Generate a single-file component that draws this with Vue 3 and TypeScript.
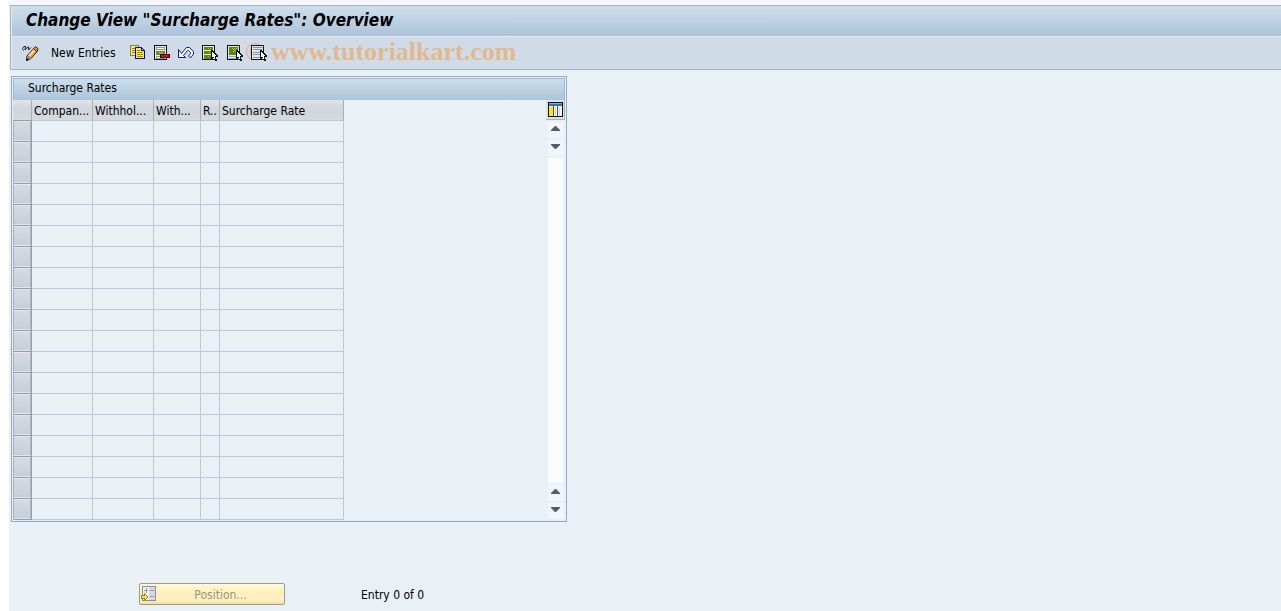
<script setup lang="ts">
interface Column {
  key: string
  label: string
}

const columns: Column[] = [
  { key: 'company', label: 'Compan...' },
  { key: 'withholding-type', label: 'Withhol...' },
  { key: 'withholding-code', label: 'With...' },
  { key: 'recipient', label: 'R..' },
  { key: 'rate', label: 'Surcharge Rate' },
]

const rowCount = 19
</script>

<template>
  <main class="screen">
    <header class="head">
      <h1 class="title">Change View "Surcharge Rates": Overview</h1>
      <div class="toolbar" role="toolbar" aria-label="Table actions">
        <span class="watermark">© www.tutorialkart.com</span>
        <button class="tool" type="button" aria-label="Display or change">
          <svg width="17" height="17" viewBox="0 0 17 17">
            <path d="M.5 3.500L2 1.500H3.500L3 5L5.500 2H6.500V5L9 2.500M.5 3.500L1.500 5.500" fill="none" stroke="#1b1b1b" />
            <path d="M5 11L12 3L15.500 6L9 13.500L4.500 15.500Z" fill="#f59a2e" stroke="#3a2412" />
            <path d="M7 11L12.500 5" stroke="#ffe58c" stroke-width="2" />
            <path d="M11.500 3.500L13.500 1.500L16 3.500V5L14.500 6.500Z" fill="#e08a4a" stroke="#4b2012" />
            <path d="M5 11.500L8.500 14" stroke="#5a82d8" stroke-width="2" />
            <path d="M4 16L4.500 13L7 15Z" fill="#111" />
          </svg>
        </button>
        <button class="new-entries" type="button">New Entries</button>
        <button class="tool" type="button" aria-label="Copy as">
          <svg width="16" height="16" viewBox="0 0 16 16" shape-rendering="crispEdges">
            <path d="M0 0H9V11H0Z" fill="#80805a" />
            <path d="M1 1H8V10H1Z" fill="#ffef32" />
            <path d="M2 3H5V4H2ZM2 5H5V6H2ZM2 7H5V8H2Z" fill="#80805a" />
            <path d="M5 2H12V3H13V4H14V5H15V14H5Z" fill="#0000e6" />
            <path d="M6 3H11V6H14V13H6Z" fill="#ffed24" />
            <path d="M12 4H13V5H12Z" fill="#fff" />
            <path d="M7 5H10V6H7ZM7 7H13V8H7ZM7 9H13V10H7ZM7 11H13V12H7Z" fill="#8f8748" />
          </svg>
        </button>
        <button class="tool" type="button" aria-label="Delete">
          <svg width="16" height="16" viewBox="0 0 16 16" shape-rendering="crispEdges">
            <path d="M0 0H13V15H0Z" fill="#111" />
            <path d="M1 1H12V14H1Z" fill="#e9edf0" />
            <path d="M2 2H11V5H2ZM2 11H11V14H2Z" fill="#8d91b3" />
            <path d="M3 3H10V4H3ZM3 12H10V13H3Z" fill="#fff" />
            <path d="M2 6H11V10H2Z" fill="#689500" />
            <path d="M5 7H6V8H5ZM7 7H8V8H7ZM6 8H7V9H6ZM8 8H9V9H8Z" fill="#b8ce75" />
            <path d="M6 9H16V13H6Z" fill="#350000" />
            <path d="M7 10H15V12H7Z" fill="#f00000" />
          </svg>
        </button>
        <button class="tool" type="button" aria-label="Undo change">
          <svg width="17" height="16" viewBox="0 0 17 16">
            <path d="M.5 4.500V12.500H7.500L5.500 10.500L9.500 5.500H10.500L12.500 7.500V8.500L10.500 11L12.500 13L15.500 9V6.500L11.500 2.500H8.500L3.500 8.500Z" fill="#f8fbff" stroke="#151595" />
          </svg>
        </button>
        <button class="tool" type="button" aria-label="Select all">
          <svg width="16" height="16" viewBox="0 0 16 16" shape-rendering="crispEdges">
            <path d="M0 0H13V15H0Z" fill="#111" />
            <path d="M1 1H12V14H1Z" fill="#edf2e2" />
            <path d="M2 2H11V5H2ZM2 6H11V9H2ZM2 10H11V14H2Z" fill="#5d8a00" />
            <path d="M6 3H7V4H6ZM8 3H9V4H8ZM7 7H8V8H7ZM6 11H7V12H6Z" fill="#a7c457" />
            <path d="M9 5H11V6H12V7H13V8H14V9H15V10H16V12H14V14H15V16H13V15H12V13H11V14H9Z" fill="#111" />
            <path d="M10 7H11V8H12V9H13V10H14V11H13V14H12V12H10Z" fill="#fff" />
          </svg>
        </button>
        <button class="tool block" type="button" aria-label="Select block">
          <svg width="16" height="16" viewBox="0 0 16 16" shape-rendering="crispEdges">
            <path d="M0 0H13V15H0Z" fill="#111" />
            <path d="M1 1H12V14H1Z" fill="#e2eaf0" />
            <path d="M2 2H11V10H2Z" fill="#5d8a00" />
            <path d="M5 3H6V4H5ZM7 3H8V4H7ZM9 3H10V4H9ZM6 4H7V5H6ZM8 4H9V5H8ZM7 5H8V6H7ZM9 5H10V6H9ZM6 6H7V7H6ZM8 6H9V7H8Z" fill="#a7c457" />
            <path d="M2 11H11V12H2ZM2 13H11V14H2Z" fill="#8da7b5" />
            <path d="M9 5H11V6H12V7H13V8H14V9H15V10H16V12H14V14H15V16H13V15H12V13H11V14H9Z" fill="#111" />
            <path d="M10 7H11V8H12V9H13V10H14V11H13V14H12V12H10Z" fill="#fff" />
          </svg>
        </button>
        <button class="tool" type="button" aria-label="Deselect all">
          <svg width="16" height="16" viewBox="0 0 16 16" shape-rendering="crispEdges">
            <path d="M0 0H13V15H0Z" fill="#111" />
            <path d="M1 1H12V14H1Z" fill="#e3e7ea" />
            <path d="M2 2H11V3H2ZM2 4H11V5H2ZM2 7H11V8H2ZM2 9H11V10H2ZM2 12H11V13H2Z" fill="#7b94a8" />
            <path d="M9 5H11V6H12V7H13V8H14V9H15V10H16V12H14V14H15V16H13V15H12V13H11V14H9Z" fill="#111" />
            <path d="M10 7H11V8H12V9H13V10H14V11H13V14H12V12H10Z" fill="#fff" />
          </svg>
        </button>
      </div>
    </header>

    <section class="panel" aria-labelledby="panel-title">
      <h2 id="panel-title" class="panel-title">Surcharge Rates</h2>
      <div class="panel-body">
        <table class="grid">
          <colgroup>
            <col class="col-select" />
            <col v-for="column in columns" :key="column.key" :class="`col-${column.key}`" />
          </colgroup>
          <thead>
            <tr>
              <th class="corner"></th>
              <th v-for="column in columns" :key="column.key" scope="col">{{ column.label }}</th>
            </tr>
          </thead>
          <tbody>
            <tr v-for="row in rowCount" :key="row">
              <td class="select-cell">
                <button class="row-select" type="button" :aria-label="`Select row ${row}`"></button>
              </td>
              <td v-for="column in columns" :key="column.key"></td>
            </tr>
          </tbody>
        </table>
        <div class="side">
          <button class="configure" type="button" aria-label="Table settings">
            <svg width="15" height="15" viewBox="0 0 15 15" shape-rendering="crispEdges">
              <path d="M0 0H15V15H0Z" fill="#111" />
              <path d="M1 1H14V14H1Z" fill="#f4f6f8" />
              <path d="M1 1H14V4H1Z" fill="#2d73b9" />
              <path d="M1 1H14V2H1Z" fill="#77aede" />
              <path d="M1 5H5V14H1Z" fill="#ffe600" />
              <path d="M5 3H6V14H5ZM9 4H10V14H9Z" fill="#455565" />
              <path d="M7 5H8V13H7ZM11 5H12V13H11Z" fill="#cbd2d8" />
            </svg>
          </button>
          <button class="arrow" type="button" aria-label="Scroll to top">
            <svg width="9" height="5" viewBox="0 0 9 5"><path d="M0 5V4L4 0H5L9 4V5Z" fill="#4d5f70" /></svg>
          </button>
          <button class="arrow" type="button" aria-label="Scroll down one row">
            <svg width="9" height="5" viewBox="0 0 9 5"><path d="M0 0V1L4 5H5L9 1V0Z" fill="#4d5f70" /></svg>
          </button>
          <div class="track"></div>
          <button class="arrow" type="button" aria-label="Scroll up one row">
            <svg width="9" height="5" viewBox="0 0 9 5"><path d="M0 5V4L4 0H5L9 4V5Z" fill="#4d5f70" /></svg>
          </button>
          <button class="arrow" type="button" aria-label="Scroll to bottom">
            <svg width="9" height="5" viewBox="0 0 9 5"><path d="M0 0V1L4 5H5L9 1V0Z" fill="#4d5f70" /></svg>
          </button>
        </div>
      </div>
    </section>

    <footer class="footer">
      <button class="position" type="button" disabled>
        <svg width="16" height="16" viewBox="0 0 16 16" shape-rendering="crispEdges">
          <path d="M1 0H15V15H1Z" fill="#8a8f9d" />
          <path d="M2 1H14V14H2Z" fill="#d3d9ea" />
          <path d="M2 1H8V14H2Z" fill="#eef1f5" />
          <path d="M3 4H7V5H3ZM5 2H6V7H5ZM9 4H13V5H9ZM9 10H13V11H9Z" fill="#9298aa" />
          <path d="M0 9H3V7H4V8H5V9H6V10H7V12H6V13H5V14H4V15H3V13H0Z" fill="#a58b1c" />
          <path d="M1 10H4V9H5V10H6V12H5V13H4V12H1Z" fill="#f8df35" />
        </svg>
        <span class="position-label">Position...</span>
      </button>
      <output class="entry">Entry 0 of 0</output>
    </footer>
  </main>
</template>

<style>
body {
  background: #fff;
}
</style>

<style scoped>
.screen {
  box-sizing: border-box;
  min-height: 100vh;
  margin-left: 9px;
  padding-top: 5px;
  background: linear-gradient(#f6f8fb 5px, #e9f0f6 5px);
  color: #000;
  font-family: "DejaVu Sans Condensed", "Noto Sans", sans-serif;
  font-size: 12px;
  line-height: 16px;
}

button {
  margin: 0;
  padding: 0;
  border: 0;
  background: none;
  color: inherit;
  font: inherit;
}

svg {
  display: block;
}

.head {
  margin-left: 1px;
  border: 1px solid #a3b4c6;
  border-right: 0;
}

.title {
  margin: 0;
  padding: 3px 14px 5px;
  border-left: 1px solid #e5edf4;
  border-bottom: 1px solid #e4edf4;
  background: linear-gradient(#cfdfeb, #bed1e1 50%, #abc3da);
  font-size: 17px;
  font-style: italic;
  font-weight: bold;
  line-height: 22px;
}

.toolbar {
  position: relative;
  display: flex;
  align-items: center;
  gap: 8px;
  height: 32px;
  padding-left: 10px;
  border-left: 1px solid #e5edf4;
  background: #cfdce7;
}

.tool {
  position: relative;
  flex: none;
  width: 16px;
  height: 16px;
}

.new-entries {
  width: 67px;
  margin: 0 4px 0 5px;
  text-align: left;
  white-space: nowrap;
}

.block {
  margin-left: 1px;
}

.watermark {
  position: absolute;
  left: 233px;
  top: 0;
  color: #e3b98c;
  font-family: "Liberation Serif", serif;
  font-size: 26px;
  font-weight: bold;
  line-height: 30px;
  white-space: nowrap;
}

.panel {
  box-sizing: border-box;
  width: 556px;
  max-width: calc(100% - 2px);
  margin: 6px 0 0 2px;
  padding: 1px;
  border: 1px solid #8dadcb;
}

.panel-title {
  margin: 0;
  padding: 1px 14px 4px;
  border: 1px solid #a2b8cc;
  border-bottom: 0;
  background: linear-gradient(#cddfeb, #abc4da);
  font-size: 12px;
  font-weight: normal;
  line-height: 16px;
}

.panel-body {
  display: flex;
  justify-content: space-between;
}

.grid {
  width: 331px;
  table-layout: fixed;
  border-collapse: separate;
  border-spacing: 0;
}

.col-select,
.col-recipient {
  width: 19px;
}

.col-company,
.col-withholding-type {
  width: 61px;
}

.col-withholding-code {
  width: 47px;
}

.col-rate {
  width: 124px;
}

.grid th,
.grid td {
  box-sizing: border-box;
  height: 21px;
  padding: 0;
  border-right: 1px solid #bdc7d5;
  border-bottom: 1px solid #bdc7d5;
}

.grid th {
  padding: 2px 0 0 2px;
  border-right-color: #a5aeba;
  background: linear-gradient(#e0e5e9, #d0d6dc 40%, #d5dade);
  font-weight: normal;
  line-height: 18px;
  text-align: left;
  white-space: nowrap;
}

.grid .corner {
  border-bottom-color: #929dab;
}

.grid .select-cell {
  border-color: #929dab;
}

.row-select {
  display: block;
  box-sizing: border-box;
  width: 100%;
  height: 20px;
  border: 1px solid #e3e7eb;
  border-left-color: #a5aeba;
  border-right-color: #b2bac4;
  background: linear-gradient(#d6dbe1, #c8ced8);
}

.side {
  display: flex;
  flex-direction: column;
  align-items: center;
  gap: 2px;
  width: 19px;
  padding-bottom: 1px;
}

.configure {
  display: grid;
  place-items: center;
  box-sizing: border-box;
  width: 19px;
  height: 20px;
  border-right: 1px solid #a9b1bb;
  border-bottom: 1px solid #a9b1bb;
  background: #dce1e6;
}

.arrow {
  display: grid;
  align-items: start;
  justify-items: center;
  box-sizing: border-box;
  width: 15px;
  height: 16px;
  padding-top: 4px;
  background: #f2f6fa;
}

.track {
  flex: 1;
  width: 15px;
  background: #fafcfd;
}

.footer {
  display: flex;
  align-items: center;
  gap: 76px;
  padding: 61px 0 6px 130px;
}

.position {
  display: flex;
  align-items: center;
  box-sizing: border-box;
  width: 146px;
  height: 22px;
  padding-left: 1px;
  border: 1px solid #9b9b94;
  border-radius: 2px;
  background: linear-gradient(#fff8d6, #fff0b8 50%, #fff2c4 80%, #f4dc98);
  color: #96968c;
}

.position-label,
.entry {
  padding-top: 2px;
}

.position-label {
  flex: 1;
  text-align: center;
}

.entry {
  white-space: nowrap;
}
</style>
